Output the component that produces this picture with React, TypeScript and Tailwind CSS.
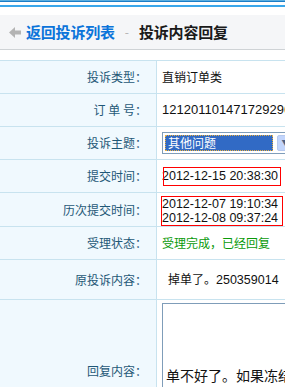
const CJK = "font-['Noto_Sans_CJK_SC',sans-serif]";
const NUM = "font-['Liberation_Sans','Noto_Sans_CJK_SC',sans-serif]";

function Row({
  label,
  height = "h-[33px]",
  align = "items-center",
  children,
}: {
  label: string;
  height?: string;
  align?: string;
  children?: React.ReactNode;
}) {
  return (
    <div className={`flex border-b border-[#c8e3ef] ${height}`}>
      <div
        className={`w-[157px] shrink-0 flex items-center justify-end pr-[9px] bg-[#f0f9fe] border-r border-[#c8e3ef] text-[12px] text-[#1f5877] ${CJK}`}
      >
        {label}
      </div>
      <div className={`flex-1 flex ${align} pl-[5px] bg-white overflow-hidden whitespace-nowrap`}>
        {children}
      </div>
    </div>
  );
}

function BackArrow() {
  return (
    <svg width="12" height="11" viewBox="0 0 12 11">
      <polygon points="0,5.5 6,0 6,11" fill="#b4b4b4" />
      <rect x="5" y="3.5" width="7" height="4" fill="#b4b4b4" />
    </svg>
  );
}

export default function App() {
  return (
    <div className={`w-[285px] h-[387px] overflow-hidden bg-white ${CJK}`}>
      {/* top lines */}
      <div className="h-px bg-[#5aaee0]" />
      <div className="h-px bg-[#1b7dc6]" />
      <div className="h-[3px]" />
      <div className="h-[2px] bg-[#3aa7ea]" />
      <div className="h-[8px]" />

      {/* breadcrumb bar */}
      <div className="h-[35px] bg-[#f5f6f8] border-b border-[#cfd3d6] flex items-center pl-[9px]">
        <BackArrow />
        <span className="ml-[5px] text-[15px] font-bold text-[#0b74da] tracking-[-0.2px]">返回投诉列表</span>
        <span className="mx-[10px] text-[12px] text-[#b0b0b0]">-</span>
        <span className="text-[15px] font-bold text-[#1a1a1a] tracking-[-0.2px]">投诉内容回复</span>
      </div>

      <div className="h-[10px]" />

      {/* table */}
      <div className="border-t border-[#c8e3ef]">
        <Row label="投诉类型：">
          <span className="text-[12px] text-[#111]">直销订单类</span>
        </Row>
        <Row label="订 单 号：">
          <span className={`text-[13px] text-[#111] ${NUM}`}>1212011014717292967</span>
        </Row>
        <Row label="投诉主题：">
          <div className="h-[22px] w-[160px] shrink-0 border border-[#7f9db9] bg-white flex items-center p-[2px]">
            <div className="h-full w-[108px] bg-[#316ac5] border border-dotted border-[#e8b040] flex items-center pl-[2px]">
              <span className="text-[12px] text-white leading-none">其他问题</span>
            </div>
            <div className="ml-[4px] h-full w-[17px] rounded-[2px] bg-[#c2d5fc] border border-[#b7c9ee] flex items-center justify-center">
              <span className="text-[8px] text-[#4d6185] leading-none">▼</span>
            </div>
          </div>
        </Row>
        <Row label="提交时间：">
          <div className="relative h-[19px] w-[120px] flex items-center">
            <div className="absolute left-[1px] top-0 w-[118px] h-[19px] border border-[#f00]" />
            <span className={`text-[12.5px] text-[#111] leading-none ${NUM}`}>2012-12-15 20:38:30</span>
          </div>
        </Row>
        <Row label="历次提交时间：" height="h-[34px]" align="items-end">
          <div className="border border-[#f00] h-[30px] w-[122px] -ml-[1px] flex flex-col justify-center">
            <span className={`text-[12.5px] text-[#111] leading-[14px] ${NUM}`}>2012-12-07 19:10:34</span>
            <span className={`text-[12.5px] text-[#111] leading-[14px] ${NUM}`}>2012-12-08 09:37:24</span>
          </div>
        </Row>
        <Row label="受理状态：">
          <span className="text-[12px] text-[#0a9a0a]">受理完成，已经回复</span>
        </Row>
        <Row label="原投诉内容：" height="h-[40px]">
          <span className="ml-[6px] text-[12px] text-[#111]">
            掉单了。<span className={`text-[12.5px] ${NUM}`}>250359014</span>
          </span>
        </Row>
        <div className="flex h-[142px]">
          <div className="w-[157px] shrink-0 flex items-center justify-end pr-[9px] bg-[#f0f9fe] border-r border-[#c8e3ef] text-[12px] text-[#1f5877]">
            回复内容：
          </div>
          <div className="flex-1 bg-white pl-[5px] pt-[3px] overflow-hidden">
            <div className="w-[200px] h-[160px] border border-[#7f9db9] pl-[3px] pt-[58px] whitespace-nowrap">
              <span className="text-[14px] text-[#111]">单不好了。如果冻结</span>
            </div>
          </div>
        </div>
      </div>
    </div>
  );
}
